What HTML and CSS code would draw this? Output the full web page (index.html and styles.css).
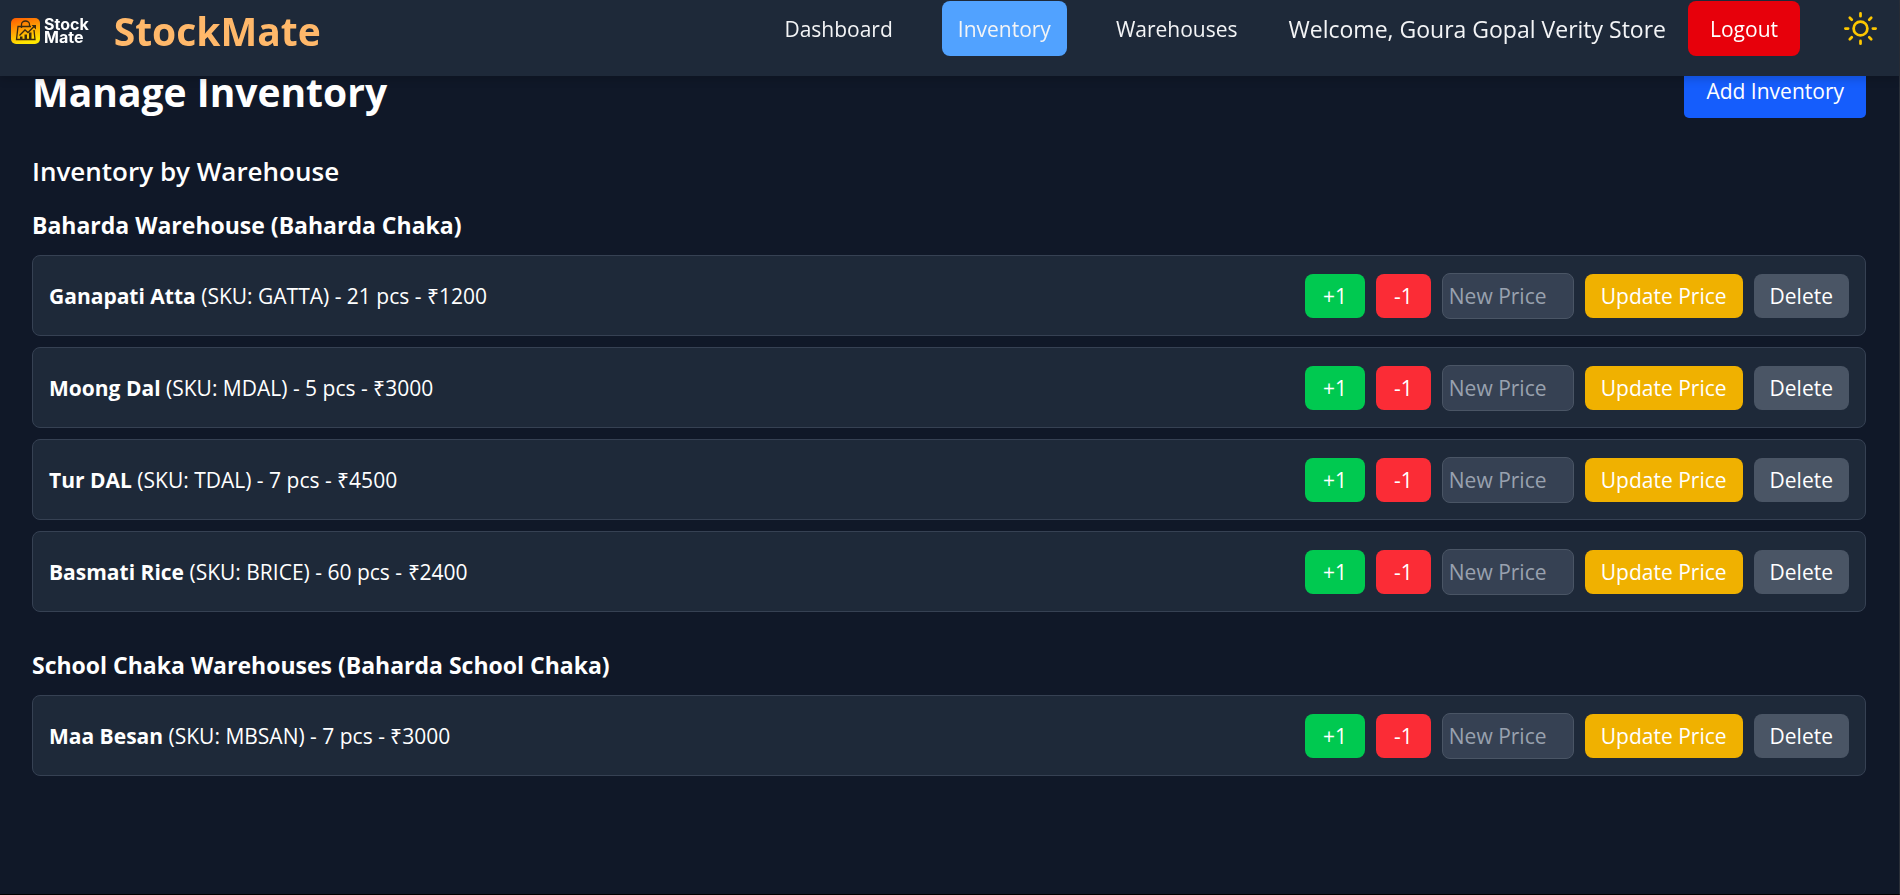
FILE: index.html
```html
<!DOCTYPE html>
<html lang="en">
<head>
<meta charset="utf-8">
<title>StockMate - Manage Inventory</title>
<link rel="stylesheet" href="styles.css">
</head>
<body>
<header class="topbar">
  <div class="brand">
    <div class="logo">
      <svg class="logo-mark" viewBox="0 0 29 26" aria-hidden="true">
        <defs>
          <linearGradient id="mark" x1="0" y1="0" x2="0.3" y2="1">
            <stop offset="0" stop-color="#ff5a00"/>
            <stop offset="0.5" stop-color="#ff9c05"/>
            <stop offset="1" stop-color="#ffe600"/>
          </linearGradient>
        </defs>
        <rect width="29" height="26" rx="5" fill="url(#mark)"/>
        <g fill="none" stroke="#3a2a10" stroke-width="1.3">
          <path d="M20 8.5H7L5.500 21.500H24L23 12"/>
          <path d="M10.500 10V6.500a4 3.500 0 0 1 8 0V8"/>
          <path d="M8.500 17.500L14 12l3 2.500L23.500 8"/>
        </g>
        <path d="M20.500 7H25v4.500z" fill="#3a2a10"/>
        <path d="M9 18.500h2.500v3H9zM13.500 16.500H16v5h-2.500zM18 14.500h2.500v7H18z" fill="#3a2a10"/>
      </svg>
      <span class="logo-text">Stock<br>Mate</span>
    </div>
    <span class="brand-name">StockMate</span>
  </div>
  <nav class="nav">
    <a class="nav-link" href="#">Dashboard</a>
    <a class="nav-link nav-link-active" href="#">Inventory</a>
    <a class="nav-link" href="#">Warehouses</a>
  </nav>
  <div class="account">
    <span class="welcome">Welcome, Goura Gopal Verity Store</span>
    <button class="logout" type="button">Logout</button>
  </div>
  <button class="theme" type="button" aria-label="Toggle theme">
    <svg class="sun" viewBox="0 0 24 24" fill="none" stroke="currentColor" stroke-width="2" stroke-linecap="round" stroke-linejoin="round">
      <circle cx="12" cy="12" r="5"/>
      <path d="M12 1v2M12 21v2M4.220 4.220l1.420 1.420M18.360 18.360l1.420 1.420M1 12h2M21 12h2M4.220 19.780l1.420-1.420M18.360 5.640l1.420-1.420"/>
    </svg>
  </button>
</header>
<main class="page">
  <div class="page-head">
    <h1 class="title">Manage Inventory</h1>
    <button class="add" type="button">Add Inventory</button>
  </div>
  <h2 class="subtitle">Inventory by Warehouse</h2>
  <section class="warehouse">
    <h3 class="warehouse-name">Baharda Warehouse (Baharda Chaka)</h3>
    <ul class="items">
      <li class="item">
        <span><strong>Ganapati Atta</strong> (SKU: GATTA) - 21 pcs - ₹1200</span>
        <div class="actions">
          <button class="btn plus" type="button">+1</button>
          <button class="btn minus" type="button">-1</button>
          <input class="price" type="text" placeholder="New Price" aria-label="New price for Ganapati Atta">
          <button class="btn update" type="button">Update Price</button>
          <button class="btn delete" type="button">Delete</button>
        </div>
      </li>
      <li class="item">
        <span><strong>Moong Dal</strong> (SKU: MDAL) - 5 pcs - ₹3000</span>
        <div class="actions">
          <button class="btn plus" type="button">+1</button>
          <button class="btn minus" type="button">-1</button>
          <input class="price" type="text" placeholder="New Price" aria-label="New price for Moong Dal">
          <button class="btn update" type="button">Update Price</button>
          <button class="btn delete" type="button">Delete</button>
        </div>
      </li>
      <li class="item">
        <span><strong>Tur DAL</strong> (SKU: TDAL) - 7 pcs - ₹4500</span>
        <div class="actions">
          <button class="btn plus" type="button">+1</button>
          <button class="btn minus" type="button">-1</button>
          <input class="price" type="text" placeholder="New Price" aria-label="New price for Tur DAL">
          <button class="btn update" type="button">Update Price</button>
          <button class="btn delete" type="button">Delete</button>
        </div>
      </li>
      <li class="item">
        <span><strong>Basmati Rice</strong> (SKU: BRICE) - 60 pcs - ₹2400</span>
        <div class="actions">
          <button class="btn plus" type="button">+1</button>
          <button class="btn minus" type="button">-1</button>
          <input class="price" type="text" placeholder="New Price" aria-label="New price for Basmati Rice">
          <button class="btn update" type="button">Update Price</button>
          <button class="btn delete" type="button">Delete</button>
        </div>
      </li>
    </ul>
  </section>
  <section class="warehouse">
    <h3 class="warehouse-name">School Chaka Warehouses (Baharda School Chaka)</h3>
    <ul class="items">
      <li class="item">
        <span><strong>Maa Besan</strong> (SKU: MBSAN) - 7 pcs - ₹3000</span>
        <div class="actions">
          <button class="btn plus" type="button">+1</button>
          <button class="btn minus" type="button">-1</button>
          <input class="price" type="text" placeholder="New Price" aria-label="New price for Maa Besan">
          <button class="btn update" type="button">Update Price</button>
          <button class="btn delete" type="button">Delete</button>
        </div>
      </li>
    </ul>
  </section>
</main>
</body>
</html>
```
FILE: styles.css
```css
* {
  box-sizing: border-box;
}

body {
  margin: 0;
  min-height: 100vh;
  border-right: 1px solid #2a2f38;
  border-bottom: 1px solid #000;
  background: #101828;
  color: #fff;
  font-family: "Segoe UI", "Open Sans", sans-serif;
  font-size: 21px;
  line-height: 33px;
}

h1, h2, h3, ul {
  margin: 0;
  padding: 0;
}

button, input {
  font: inherit;
  color: inherit;
}

button {
  border: 0;
  padding: 0;
  cursor: pointer;
}

.topbar {
  position: fixed;
  inset: 0 1px auto 0;
  z-index: 10;
  display: flex;
  align-items: flex-start;
  height: 76px;
  padding: 1px 22px 0 11px;
  background: #1e2939;
  box-shadow: 0 4px 8px rgba(0, 0, 0, 0.15);
}

.brand {
  display: flex;
  align-items: center;
  gap: 25px;
  height: 60px;
  margin-right: auto;
}

.logo {
  display: flex;
  align-items: center;
  gap: 4px;
}

.logo-mark {
  width: 29px;
  height: 26px;
}

.logo-text {
  font-family: Inter, sans-serif;
  font-size: 16px;
  font-weight: 700;
  line-height: 13px;
}

.brand-name {
  color: #ffb86a;
  font-size: 39px;
  font-weight: 700;
  line-height: 60px;
}

.nav {
  display: flex;
  gap: 33px;
}

.nav-link {
  padding: 12px 16px 10px;
  border-radius: 8px;
  color: #f3f4f6;
  text-decoration: none;
}

.nav-link-active {
  background: #51a2ff;
}

.account {
  display: flex;
  align-items: center;
  gap: 22px;
  margin-left: 35px;
}

.welcome {
  padding-top: 2px;
  color: #f3f4f6;
  font-size: 23px;
}

.logout {
  padding: 12px 22px 10px;
  border-radius: 8px;
  background: #e7000b;
}

.theme {
  display: flex;
  margin: 11px 0 0 44px;
  background: none;
  color: #fdc700;
}

.sun {
  width: 33px;
  height: 33px;
}

.page {
  padding: 63px 33px 0 32px;
}

.page-head {
  display: flex;
  align-items: center;
  justify-content: space-between;
  margin-bottom: 33px;
}

.title {
  padding-top: 2px;
  font-size: 39px;
  font-weight: 700;
  line-height: 53px;
}

.add {
  padding: 12px 22px 10px;
  border-radius: 5px;
  background: #155dfc;
}

.subtitle {
  margin-bottom: 16px;
  font-size: 26px;
  font-weight: 600;
  line-height: 40px;
}

.warehouse {
  margin-bottom: 35px;
}

.warehouse-name {
  margin-bottom: 11px;
  font-size: 23px;
  font-weight: 700;
  line-height: 37px;
}

.items {
  display: flex;
  flex-direction: column;
  gap: 11px;
  list-style: none;
}

.item {
  display: flex;
  align-items: center;
  justify-content: space-between;
  padding: 17px 16px 16px;
  border: 1px solid #364153;
  border-radius: 8px;
  background: #1e2939;
}

.actions {
  display: flex;
  align-items: center;
  gap: 11px;
}

.btn {
  padding: 6px 16px;
  border-radius: 8px;
  line-height: 32px;
}

.plus,
.minus {
  padding: 6px 18px;
}

.plus {
  background: #00c950;
}

.minus {
  background: #fb2c36;
}

.update {
  background: #f0b100;
}

.delete {
  background: #4a5565;
}

.price {
  width: 132px;
  padding: 6px 6px 5px;
  border: 1px solid #4a5565;
  border-radius: 8px;
  background: #364153;
  line-height: 33px;
}

.price::placeholder {
  color: #99a1af;
}
```
